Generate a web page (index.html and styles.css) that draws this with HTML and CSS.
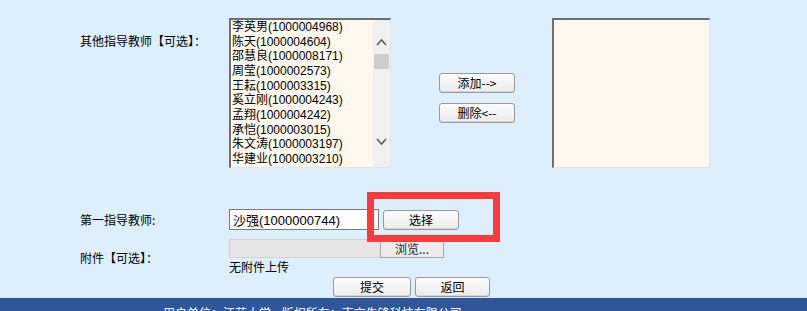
FILE: index.html
```html
<!DOCTYPE html>
<html lang="zh-CN">
<head>
    <meta charset="UTF-8">
    <meta name="viewport" content="width=device-width, initial-scale=1.0">
    <title>指导教师</title>
    <link rel="stylesheet" href="styles.css">
</head>
<body>
    <div class="main">
        <div class="row row-teachers">
            <div class="label label-top">其他指导教师【可选】：</div>
            <div class="listbox">
                <ul class="options">
                    <li>李英男(1000004968)</li>
                    <li>陈天(1000004604)</li>
                    <li>邵慧良(1000008171)</li>
                    <li>周莹(1000002573)</li>
                    <li>王耘(1000003315)</li>
                    <li>奚立刚(1000004243)</li>
                    <li>孟翔(1000004242)</li>
                    <li>承恺(1000003015)</li>
                    <li>朱文涛(1000003197)</li>
                    <li>华建业(1000003210)</li>
                </ul>
                <div class="scrollbar">
                    <svg class="arrow" width="17" height="14" viewBox="0 0 17 14"><polyline points="4,10 8.5,5 13,10" fill="none" stroke="#5f5f5f" stroke-width="1.6"/></svg>
                    <div class="thumb"></div>
                    <div class="track"></div>
                    <svg class="arrow arrow-down" width="17" height="14" viewBox="0 0 17 14"><polyline points="4,4 8.5,9 13,4" fill="none" stroke="#5f5f5f" stroke-width="1.6"/></svg>
                </div>
            </div>
            <div class="move-buttons">
                <button class="btn btn-move">添加--&gt;</button>
                <button class="btn btn-move">删除&lt;--</button>
            </div>
            <div class="listbox listbox-empty"></div>
        </div>

        <div class="row row-first">
            <div class="label">第一指导教师:</div>
            <input class="text-input" type="text" value="沙强(1000000744)">
            <button class="btn btn-select">选择</button>
            <div class="highlight"></div>
        </div>

        <div class="row row-attach">
            <div class="label">附件【可选】：</div>
            <div class="attach">
                <div class="file-input">
                    <div class="file-path"></div>
                    <div class="file-browse">浏览...</div>
                </div>
                <div class="attach-note">无附件上传</div>
            </div>
        </div>

        <div class="actions">
            <button class="btn btn-submit">提交</button>
            <button class="btn btn-back">返回</button>
        </div>
    </div>

    <div class="footer">用户单位：江苏大学&nbsp;&nbsp;&nbsp;&nbsp;版权所有：南京先锋科技有限公司</div>
</body>
</html>
```

FILE: styles.css
```css
html {
    overflow: hidden;
}

body {
    margin: 0;
    background-color: #ddeefc;
    font-family: "Liberation Sans", "Noto Sans CJK SC", sans-serif;
    font-size: 12px;
    color: #000;
}

.main {
    padding: 18px 0 1px 80px;
}

.row {
    display: flex;
    align-items: center;
}

.label {
    width: 149px;
    font-family: "Noto Sans CJK SC", sans-serif;
    font-size: 12px;
    line-height: 14px;
}

.row-teachers {
    align-items: flex-start;
    height: 150px;
}

.label-top {
    padding-top: 16px;
}

/* list boxes */
.listbox {
    display: flex;
    width: 159px;
    height: 147px;
    background-color: #fff8ee;
    border-style: solid;
    border-width: 2px 1px 1px 2px;
    border-color: #6e6e6e #e4e4e4 #e4e4e4 #6e6e6e;
}

.listbox-empty {
    width: 155px;
    margin-left: 37px;
}

.options {
    list-style: none;
    margin: 0;
    padding: 0 0 0 1px;
    flex: 1;
    overflow: hidden;
    line-height: 14.67px;
    font-size: 12px;
    white-space: nowrap;
}

.scrollbar {
    width: 17px;
    background-color: #f0f0f0;
    display: flex;
    flex-direction: column;
    align-items: center;
    padding-top: 15px;
}

.arrow {
    display: block;
}

.thumb {
    width: 15px;
    height: 15px;
    margin-top: 5px;
    background-color: #cdcdcd;
}

.track {
    flex: 1;
}

.arrow-down {
    margin-bottom: 18px;
}

/* buttons */
.btn {
    font-family: "Noto Sans CJK SC", "Liberation Sans", sans-serif;
    font-size: 12px;
    line-height: 16px;
    height: 20px;
    padding: 0;
    color: #000;
    background: linear-gradient(#fdfdfd, #ebebeb);
    border: 1px solid #9a9a9a;
    border-radius: 3px;
    box-shadow: inset 0 -1px 0 #d6d6d6;
}

.move-buttons {
    display: flex;
    flex-direction: column;
    gap: 10px;
    margin: 55px 0 0 48px;
}

.btn-move {
    width: 76px;
}

.row-first {
    position: relative;
    margin-top: 41px;
}

.text-input {
    box-sizing: border-box;
    width: 150px;
    height: 21px;
    margin: 0;
    padding: 0 3px;
    border: 1px solid #7a7a7a;
    background-color: #fff;
    font-family: "Liberation Sans", "Noto Sans CJK SC", sans-serif;
    font-size: 13px;
    color: #000;
}

.btn-select {
    width: 76px;
    margin-left: 4px;
}

.highlight {
    position: absolute;
    left: 287px;
    top: -17px;
    width: 119px;
    height: 36px;
    border: 7px solid #ff3a3a;
}

.row-attach {
    margin-top: 9px;
}

.file-input {
    display: flex;
    height: 19px;
}

.file-path {
    width: 150px;
    background-color: #e6e6e6;
    border: 1px solid #d2d2d2;
    border-right: none;
}

.file-browse {
    width: 62px;
    background-color: #ececec;
    border: 1px solid #a9a9a9;
    font-family: "Noto Sans CJK SC", sans-serif;
    line-height: 17px;
    text-align: center;
    color: #222;
}

.attach-note {
    font-family: "Noto Sans CJK SC", sans-serif;
    line-height: 18px;
}

.actions {
    display: flex;
    gap: 4px;
    margin-top: 1px;
    padding-left: 253px;
}

.btn-submit {
    width: 78px;
}

.btn-back {
    width: 75px;
}

.footer {
    height: 30px;
    padding: 8px 0 0 163px;
    background-color: #2e5698;
    color: #fff;
    font-family: "Noto Sans CJK SC", sans-serif;
    font-size: 12px;
    line-height: 14px;
}
```
